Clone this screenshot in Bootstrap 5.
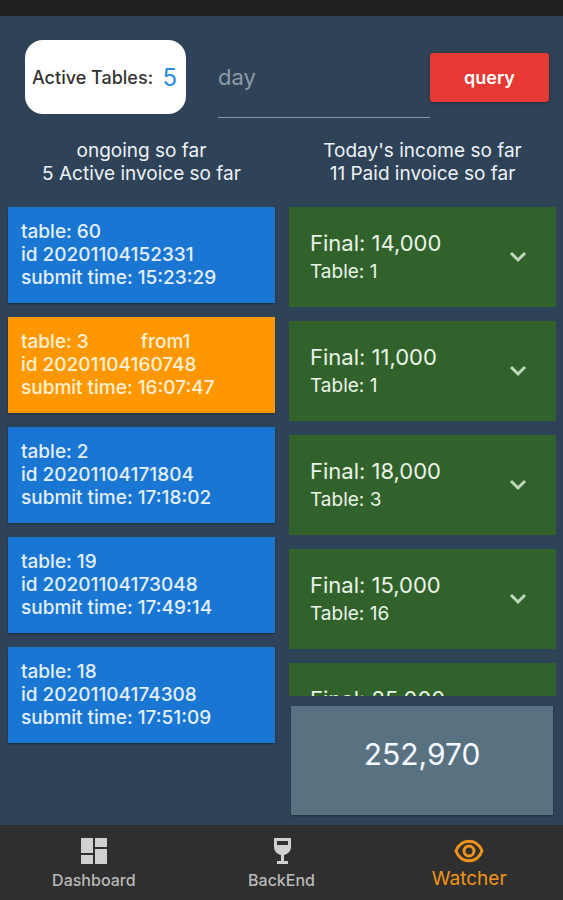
<!DOCTYPE html>
<html lang="en">
<head>
<meta charset="utf-8">
<meta name="viewport" content="width=device-width, initial-scale=1">
<title>Watcher</title>
<link rel="stylesheet" href="https://cdn.jsdelivr.net/npm/bootstrap@5.3.0/dist/css/bootstrap.min.css">
<style>
body { background: #2e4357; color: #eef2f6; font-family: Inter, "Liberation Sans", sans-serif; font-size: 19px; line-height: 23px; }
.status-strip { height: 16px; background: #212121; }
.toolbar { padding: 24px 14px 21px 25px; }
.active-pill { background: #fff; color: #333; border-radius: 18px; padding: 0 9px 0 7px; height: 74px; flex: 0 0 161px; font-size: 18px; font-weight: 500; }
.active-pill strong { color: #2b8ce6; font-size: 24px; font-weight: 400; }
.day-box { background: transparent; border: 0; border-bottom: 1px solid #8594a3; border-radius: 0; color: #fff; font-size: 22px; line-height: 30px; padding: 22px 0 25px; margin-left: 32px; min-width: 0; }
.day-box::placeholder { color: #8d9aa7; opacity: 1; }
.day-box:focus { background: transparent; color: #fff; box-shadow: none; }
.query-btn { background: #e63934; color: #fff; border: 0; border-radius: 3px; font-size: 18px; font-weight: 600; height: 49px; flex: 0 0 119px; margin-top: 13px; box-shadow: 0 1px 3px rgba(0,0,0,.4); }
.query-btn:hover { background: #d3322e; color: #fff; }
.columns { gap: 14px; padding: 0 7px 10px 8px; min-height: 0; }
.half { flex: 1 1 0; min-width: 0; }
.heading { font-size: 19px; line-height: 23px; margin: 0 0 22px; font-weight: 400; }
.stack { gap: 14px; }
.invoices { flex: 1 1 0; }
.order { background: #1976d2; color: #e4effa; font-weight: 500; padding: 13px 13px 14px; box-shadow: 0 1px 2px rgba(0,0,0,.35); }
.order.moved { background: #ff9800; color: #fff0d6; }
.origin { margin-left: 52px; }
.invoice { background: #32622b; color: #eaf3e8; border: 0; padding: 22px 27px 21px 21px; }
.final { font-size: 22px; line-height: 29px; }
.seat { font-size: 19px; line-height: 28px; }
.total { background: #587282; color: #f6faff; font-size: 30px; line-height: 36px; padding: 30px 0 43px; margin: 10px 3px 0 2px; box-shadow: 0 1px 2px rgba(0,0,0,.3); }
.tabs { background: #2f2f2f; padding: 11px 0 6px; }
.tab { color: #b9b9b9; font-size: 16px; font-weight: 500; line-height: 28px; }
.tab.current { color: #ef931a; font-size: 19px; font-weight: 400; line-height: 26px; }
</style>
<script src="https://cdn.jsdelivr.net/npm/bootstrap@5.3.0/dist/js/bootstrap.bundle.min.js"></script>
</head>
<body>
<div class="d-flex flex-column vh-100 overflow-hidden">
  <div class="status-strip flex-shrink-0"></div>
  <header class="toolbar d-flex align-items-start flex-shrink-0">
    <div class="active-pill d-flex align-items-center justify-content-between text-nowrap"><span>Active Tables:</span><strong>5</strong></div>
    <input class="day-box form-control flex-fill" type="text" placeholder="day" aria-label="day">
    <button class="query-btn btn p-0" type="button">query</button>
  </header>
  <main class="columns d-flex flex-fill">
    <section class="half d-flex flex-column">
      <h2 class="heading text-center">ongoing so far<br>5 Active invoice so far</h2>
      <div class="stack d-flex flex-column">
        <article class="order"><div>table: 60</div><div>id 20201104152331</div><div>submit time: 15:23:29</div></article>
        <article class="order moved"><div>table: 3<span class="origin">from1</span></div><div>id 20201104160748</div><div>submit time: 16:07:47</div></article>
        <article class="order"><div>table: 2</div><div>id 20201104171804</div><div>submit time: 17:18:02</div></article>
        <article class="order"><div>table: 19</div><div>id 20201104173048</div><div>submit time: 17:49:14</div></article>
        <article class="order"><div>table: 18</div><div>id 20201104174308</div><div>submit time: 17:51:09</div></article>
      </div>
    </section>
    <section class="half d-flex flex-column">
      <h2 class="heading text-center">Today's income so far<br>11 Paid invoice so far</h2>
      <div class="stack invoices d-flex flex-column overflow-hidden">
        <button type="button" class="invoice d-flex align-items-center justify-content-between text-start flex-shrink-0"><span><span class="final d-block">Final: 14,000</span><span class="seat d-block">Table: 1</span></span><svg width="22" height="22" viewBox="0 0 22 22" fill="none" stroke="#bfd8bb" stroke-width="3" aria-hidden="true"><path d="M4 6l7 7 7-7"/></svg></button>
        <button type="button" class="invoice d-flex align-items-center justify-content-between text-start flex-shrink-0"><span><span class="final d-block">Final: 11,000</span><span class="seat d-block">Table: 1</span></span><svg width="22" height="22" viewBox="0 0 22 22" fill="none" stroke="#bfd8bb" stroke-width="3" aria-hidden="true"><path d="M4 6l7 7 7-7"/></svg></button>
        <button type="button" class="invoice d-flex align-items-center justify-content-between text-start flex-shrink-0"><span><span class="final d-block">Final: 18,000</span><span class="seat d-block">Table: 3</span></span><svg width="22" height="22" viewBox="0 0 22 22" fill="none" stroke="#bfd8bb" stroke-width="3" aria-hidden="true"><path d="M4 6l7 7 7-7"/></svg></button>
        <button type="button" class="invoice d-flex align-items-center justify-content-between text-start flex-shrink-0"><span><span class="final d-block">Final: 15,000</span><span class="seat d-block">Table: 16</span></span><svg width="22" height="22" viewBox="0 0 22 22" fill="none" stroke="#bfd8bb" stroke-width="3" aria-hidden="true"><path d="M4 6l7 7 7-7"/></svg></button>
        <button type="button" class="invoice d-flex align-items-center justify-content-between text-start flex-shrink-0"><span class="final">Final: 25,000</span></button>
      </div>
      <div class="total text-center flex-shrink-0">252,970</div>
    </section>
  </main>
  <nav class="tabs d-flex flex-shrink-0">
    <a href="#" class="tab d-flex flex-column align-items-center text-decoration-none col"><svg width="30" height="30" viewBox="0 0 30 30" fill="#d0d0d0" aria-hidden="true"><path d="M2 2h12v15H2zM16 2h12v9H16zM2 19h12v9H2zM16 13h12v15H16z"/></svg>Dashboard</a>
    <a href="#" class="tab d-flex flex-column align-items-center text-decoration-none col"><svg width="30" height="30" viewBox="0 0 30 30" fill="#d0d0d0" aria-hidden="true"><path fill-rule="evenodd" d="M7 2h17v9c0 4-3 7-7 8v6h4v3H10v-3h4v-6c-4-1-7-4-7-8zM10 5v4h11V5z"/></svg>BackEnd</a>
    <a href="#" class="tab current d-flex flex-column align-items-center text-decoration-none col" aria-current="page"><svg width="32" height="30" viewBox="0 0 32 30" fill="none" stroke="#ef931a" stroke-width="3" aria-hidden="true"><path d="M3 15C8 2 24 2 29 15C24 28 8 28 3 15Z"/><circle cx="16" cy="15" r="5"/></svg>Watcher</a>
  </nav>
</div>
</body>
</html>
